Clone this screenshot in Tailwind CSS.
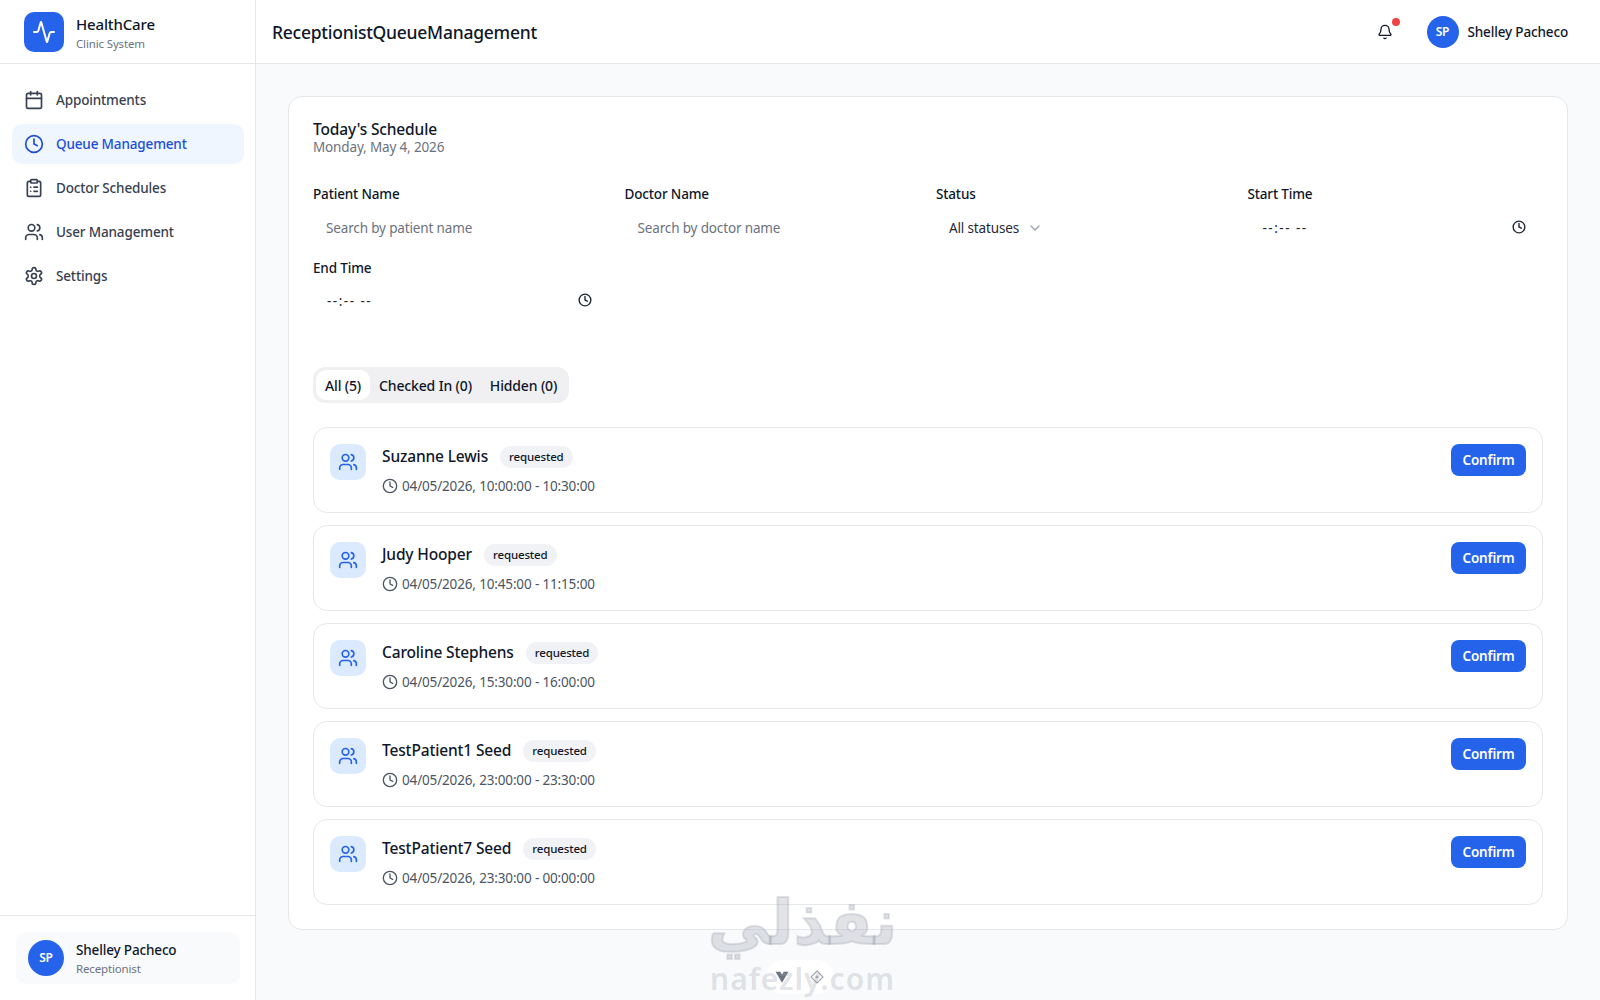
<!DOCTYPE html>
<html lang="en">
<head>
<meta charset="utf-8">
<script src="https://cdn.jsdelivr.net/npm/@tailwindcss/browser@4"></script>
<title>Queue Management</title>
</head>
<body class="font-['Noto_Sans',sans-serif] text-[#0f172a] bg-white">
<div class="relative flex h-[1000px] w-[1600px] overflow-hidden tracking-[-0.15px]">
  <aside class="flex h-full w-[256px] shrink-0 flex-col border-r border-[#e5e7eb] bg-white">
    <div class="flex h-[64px] items-center gap-3 border-b border-[#e5e7eb] px-6">
      <div class="flex h-10 w-10 items-center justify-center rounded-[10px] bg-[#2563eb]">
        <svg class="h-6 w-6" viewBox="0 0 24 24" fill="none" stroke="white" stroke-width="2" stroke-linecap="round" stroke-linejoin="round"><path d="M22 12h-2.48a2 2 0 0 0-1.93 1.46l-2.35 8.36a.25.25 0 0 1-.48 0L9.24 2.18a.25.25 0 0 0-.48 0l-2.35 8.36A2 2 0 0 1 4.49 12H2"/></svg>
      </div>
      <div class="pt-[3px]">
        <div class="text-[15px] leading-[20px] font-medium">HealthCare</div>
        <div class="mt-[2px] text-[11.5px] leading-[16px] text-[#6b7280]">Clinic System</div>
      </div>
    </div>
    <nav class="flex flex-1 flex-col gap-1 py-4 pr-[11px] pl-3">
      <a class="flex h-[40px] items-center gap-3 rounded-[10px] px-3 text-[13.5px] font-medium text-[#374151]">
        <svg class="h-5 w-5" viewBox="0 0 24 24" fill="none" stroke="currentColor" stroke-width="2" stroke-linecap="round" stroke-linejoin="round"><path d="M8 2v4"/><path d="M16 2v4"/><rect width="18" height="18" x="3" y="4" rx="2"/><path d="M3 10h18"/></svg>
        Appointments</a>
      <a class="flex h-[40px] items-center gap-3 rounded-[10px] bg-[#eff6ff] px-3 text-[13.5px] font-medium text-[#1d4ed8]">
        <svg class="h-5 w-5" viewBox="0 0 24 24" fill="none" stroke="currentColor" stroke-width="2" stroke-linecap="round" stroke-linejoin="round"><circle cx="12" cy="12" r="10"/><polyline points="12 6 12 12 16 14"/></svg>
        Queue Management</a>
      <a class="flex h-[40px] items-center gap-3 rounded-[10px] px-3 text-[13.5px] font-medium text-[#374151]">
        <svg class="h-5 w-5" viewBox="0 0 24 24" fill="none" stroke="currentColor" stroke-width="2" stroke-linecap="round" stroke-linejoin="round"><rect width="8" height="4" x="8" y="2" rx="1"/><path d="M16 4h2a2 2 0 0 1 2 2v14a2 2 0 0 1-2 2H6a2 2 0 0 1-2-2V6a2 2 0 0 1 2-2h2"/><path d="M12 11h4"/><path d="M12 16h4"/><path d="M8 11h.01"/><path d="M8 16h.01"/></svg>
        Doctor Schedules</a>
      <a class="flex h-[40px] items-center gap-3 rounded-[10px] px-3 text-[13.5px] font-medium text-[#374151]">
        <svg class="h-5 w-5" viewBox="0 0 24 24" fill="none" stroke="currentColor" stroke-width="2" stroke-linecap="round" stroke-linejoin="round"><path d="M16 21v-2a4 4 0 0 0-4-4H6a4 4 0 0 0-4 4v2"/><circle cx="9" cy="7" r="4"/><path d="M22 21v-2a4 4 0 0 0-3-3.87"/><path d="M16 3.13a4 4 0 0 1 0 7.75"/></svg>
        User Management</a>
      <a class="flex h-[40px] items-center gap-3 rounded-[10px] px-3 text-[13.5px] font-medium text-[#374151]">
        <svg class="h-5 w-5" viewBox="0 0 24 24" fill="none" stroke="currentColor" stroke-width="2" stroke-linecap="round" stroke-linejoin="round"><path d="M12.22 2h-.44a2 2 0 0 0-2 2v.18a2 2 0 0 1-1 1.73l-.43.25a2 2 0 0 1-2 0l-.15-.08a2 2 0 0 0-2.73.73l-.22.38a2 2 0 0 0 .73 2.73l.15.1a2 2 0 0 1 1 1.72v.51a2 2 0 0 1-1 1.74l-.15.09a2 2 0 0 0-.73 2.73l.22.38a2 2 0 0 0 2.73.73l.15-.08a2 2 0 0 1 2 0l.43.25a2 2 0 0 1 1 1.73V20a2 2 0 0 0 2 2h.44a2 2 0 0 0 2-2v-.18a2 2 0 0 1 1-1.73l.43-.25a2 2 0 0 1 2 0l.15.08a2 2 0 0 0 2.73-.73l.22-.39a2 2 0 0 0-.73-2.73l-.15-.08a2 2 0 0 1-1-1.74v-.5a2 2 0 0 1 1-1.74l.15-.09a2 2 0 0 0 .73-2.73l-.22-.38a2 2 0 0 0-2.73-.73l-.15.08a2 2 0 0 1-2 0l-.43-.25a2 2 0 0 1-1-1.73V4a2 2 0 0 0-2-2z"/><circle cx="12" cy="12" r="3"/></svg>
        Settings</a>
    </nav>
    <div class="border-t border-[#e5e7eb] py-4 pr-[15px] pl-4">
      <div class="flex h-[52px] items-center gap-3 rounded-[10px] bg-[#f9fafb] px-3">
        <div class="flex h-9 w-9 items-center justify-center rounded-full bg-[#2563eb] text-[12px] font-semibold text-white">SP</div>
        <div class="pt-[1px]">
          <div class="text-[13.5px] leading-[20px] font-medium">Shelley Pacheco</div>
          <div class="mt-[1px] text-[11.5px] leading-[16px] text-[#6b7280]">Receptionist</div>
        </div>
      </div>
    </div>
  </aside>
  <div class="flex h-full flex-1 flex-col bg-[#f9fafb]">
    <header class="flex h-[64px] shrink-0 items-center justify-between border-b border-[#e5e7eb] bg-white pr-8 pl-4">
      <h1 class="pt-[2px] text-[17.5px] font-medium tracking-[-0.25px]">ReceptionistQueueManagement</h1>
      <div class="flex items-center gap-[26px]">
        <div class="relative flex h-8 w-8 items-center justify-center">
          <svg class="h-4 w-4" viewBox="0 0 24 24" fill="none" stroke="currentColor" stroke-width="2" stroke-linecap="round" stroke-linejoin="round"><path d="M10.268 21a2 2 0 0 0 3.464 0"/><path d="M3.262 15.326A1 1 0 0 0 4 17h16a1 1 0 0 0 .74-1.673C19.41 13.956 18 12.499 18 8A6 6 0 0 0 6 8c0 4.499-1.411 5.956-2.738 7.326"/></svg>
          <span class="absolute top-[2px] right-[1px] h-2 w-2 rounded-full bg-[#ef4444]"></span>
        </div>
        <div class="flex items-center gap-[9px]">
          <div class="flex h-8 w-8 items-center justify-center rounded-full bg-[#2563eb] text-[12px] font-semibold text-white">SP</div>
          <span class="pt-[2px] text-[13.5px] font-medium">Shelley Pacheco</span>
        </div>
      </div>
    </header>
    <main class="flex-1 p-8">
      <section class="rounded-[14px] border border-[#e5e7eb] bg-white p-6">
        <h2 class="text-[15.5px] leading-[16px] font-medium">Today's Schedule</h2>
        <p class="text-[13.5px] leading-[20px] text-[#6b7280]">Monday, May 4, 2026</p>
        <div class="mt-[27px] grid grid-cols-4 gap-x-4 gap-y-3">
          <div>
            <label class="block text-[13.5px] leading-[20px] font-medium">Patient Name</label>
            <div class="mt-[6px] flex h-9 items-center px-[13px] text-[13.5px] text-[#6b7280]">Search by patient name</div>
          </div>
          <div>
            <label class="block text-[13.5px] leading-[20px] font-medium">Doctor Name</label>
            <div class="mt-[6px] flex h-9 items-center px-[13px] text-[13.5px] text-[#6b7280]">Search by doctor name</div>
          </div>
          <div>
            <label class="block text-[13.5px] leading-[20px] font-medium">Status</label>
            <div class="mt-[6px] flex h-9 items-center gap-2 px-[13px] text-[13.5px] text-[#1f2937]">All statuses
              <svg class="h-4 w-4 text-[#9ca3af]" viewBox="0 0 24 24" fill="none" stroke="currentColor" stroke-width="2" stroke-linecap="round" stroke-linejoin="round"><path d="m6 9 6 6 6-6"/></svg>
            </div>
          </div>
          <div>
            <label class="block text-[13.5px] leading-[20px] font-medium">Start Time</label>
            <div class="mt-[6px] flex h-9 items-center justify-between pr-[17px] pl-[15px] text-[13.5px] tracking-[1.5px] text-[#1f2937]"><span>--:-- --</span>
              <svg class="-mt-[2px] h-[14px] w-[14px]" viewBox="0 0 24 24" fill="none" stroke="currentColor" stroke-width="2.4" stroke-linecap="round" stroke-linejoin="round"><circle cx="12" cy="12" r="10"/><polyline points="12 6 12 12 16 14"/></svg>
            </div>
          </div>
          <div>
            <label class="block text-[13.5px] leading-[20px] font-medium">End Time</label>
            <div class="mt-[5px] flex h-9 items-center justify-between pr-[17px] pl-[14px] text-[13.5px] tracking-[1.5px] text-[#1f2937]"><span>--:-- --</span>
              <svg class="-mt-[2px] h-[14px] w-[14px]" viewBox="0 0 24 24" fill="none" stroke="currentColor" stroke-width="2.4" stroke-linecap="round" stroke-linejoin="round"><circle cx="12" cy="12" r="10"/><polyline points="12 6 12 12 16 14"/></svg>
            </div>
          </div>
        </div>
        <div class="mt-[48px] inline-flex h-9 items-center rounded-[12px] bg-[#f0f0f2] p-[3px] text-[14px] font-medium">
          <span class="flex h-[30px] items-center rounded-[10px] bg-white px-[9px]">All (5)</span>
          <span class="flex h-[30px] items-center px-[9px]">Checked In (0)</span>
          <span class="flex h-[30px] items-center px-[9px]">Hidden (0)</span>
        </div>
        <div class="mt-6 flex flex-col gap-3">
          <article class="flex h-[86px] items-start justify-between rounded-[14px] border border-[#e5e7eb] p-4">
            <div class="flex gap-4">
              <div class="flex h-9 w-9 items-center justify-center rounded-[10px] bg-[#dbeafe] text-[#2563eb]">
                <svg class="h-5 w-5" viewBox="0 0 24 24" fill="none" stroke="currentColor" stroke-width="2" stroke-linecap="round" stroke-linejoin="round"><path d="M16 21v-2a4 4 0 0 0-4-4H6a4 4 0 0 0-4 4v2"/><circle cx="9" cy="7" r="4"/><path d="M22 21v-2a4 4 0 0 0-3-3.87"/><path d="M16 3.13a4 4 0 0 1 0 7.75"/></svg>
              </div>
              <div class="pt-[1px]">
                <div class="flex h-6 items-center gap-3"><span class="text-[15.5px] font-medium">Suzanne Lewis</span><span class="rounded-full bg-[#f1f2f5] px-[9px] py-[3px] text-[11.5px] leading-[16px] font-medium">requested</span></div>
                <div class="mt-[7px] flex items-center gap-1 text-[13.5px] leading-[20px] text-[#4b5563]">
                  <svg class="h-4 w-4" viewBox="0 0 24 24" fill="none" stroke="currentColor" stroke-width="2" stroke-linecap="round" stroke-linejoin="round"><circle cx="12" cy="12" r="10"/><polyline points="12 6 12 12 16 14"/></svg>
                  04/05/2026, 10:00:00 - 10:30:00</div>
              </div>
            </div>
            <button class="h-8 w-[75px] rounded-[8px] bg-[#2563eb] text-[13.5px] font-semibold text-white">Confirm</button>
          </article>
          <article class="flex h-[86px] items-start justify-between rounded-[14px] border border-[#e5e7eb] p-4">
            <div class="flex gap-4">
              <div class="flex h-9 w-9 items-center justify-center rounded-[10px] bg-[#dbeafe] text-[#2563eb]">
                <svg class="h-5 w-5" viewBox="0 0 24 24" fill="none" stroke="currentColor" stroke-width="2" stroke-linecap="round" stroke-linejoin="round"><path d="M16 21v-2a4 4 0 0 0-4-4H6a4 4 0 0 0-4 4v2"/><circle cx="9" cy="7" r="4"/><path d="M22 21v-2a4 4 0 0 0-3-3.87"/><path d="M16 3.13a4 4 0 0 1 0 7.75"/></svg>
              </div>
              <div class="pt-[1px]">
                <div class="flex h-6 items-center gap-3"><span class="text-[15.5px] font-medium">Judy Hooper</span><span class="rounded-full bg-[#f1f2f5] px-[9px] py-[3px] text-[11.5px] leading-[16px] font-medium">requested</span></div>
                <div class="mt-[7px] flex items-center gap-1 text-[13.5px] leading-[20px] text-[#4b5563]">
                  <svg class="h-4 w-4" viewBox="0 0 24 24" fill="none" stroke="currentColor" stroke-width="2" stroke-linecap="round" stroke-linejoin="round"><circle cx="12" cy="12" r="10"/><polyline points="12 6 12 12 16 14"/></svg>
                  04/05/2026, 10:45:00 - 11:15:00</div>
              </div>
            </div>
            <button class="h-8 w-[75px] rounded-[8px] bg-[#2563eb] text-[13.5px] font-semibold text-white">Confirm</button>
          </article>
          <article class="flex h-[86px] items-start justify-between rounded-[14px] border border-[#e5e7eb] p-4">
            <div class="flex gap-4">
              <div class="flex h-9 w-9 items-center justify-center rounded-[10px] bg-[#dbeafe] text-[#2563eb]">
                <svg class="h-5 w-5" viewBox="0 0 24 24" fill="none" stroke="currentColor" stroke-width="2" stroke-linecap="round" stroke-linejoin="round"><path d="M16 21v-2a4 4 0 0 0-4-4H6a4 4 0 0 0-4 4v2"/><circle cx="9" cy="7" r="4"/><path d="M22 21v-2a4 4 0 0 0-3-3.87"/><path d="M16 3.13a4 4 0 0 1 0 7.75"/></svg>
              </div>
              <div class="pt-[1px]">
                <div class="flex h-6 items-center gap-3"><span class="text-[15.5px] font-medium">Caroline Stephens</span><span class="rounded-full bg-[#f1f2f5] px-[9px] py-[3px] text-[11.5px] leading-[16px] font-medium">requested</span></div>
                <div class="mt-[7px] flex items-center gap-1 text-[13.5px] leading-[20px] text-[#4b5563]">
                  <svg class="h-4 w-4" viewBox="0 0 24 24" fill="none" stroke="currentColor" stroke-width="2" stroke-linecap="round" stroke-linejoin="round"><circle cx="12" cy="12" r="10"/><polyline points="12 6 12 12 16 14"/></svg>
                  04/05/2026, 15:30:00 - 16:00:00</div>
              </div>
            </div>
            <button class="h-8 w-[75px] rounded-[8px] bg-[#2563eb] text-[13.5px] font-semibold text-white">Confirm</button>
          </article>
          <article class="flex h-[86px] items-start justify-between rounded-[14px] border border-[#e5e7eb] p-4">
            <div class="flex gap-4">
              <div class="flex h-9 w-9 items-center justify-center rounded-[10px] bg-[#dbeafe] text-[#2563eb]">
                <svg class="h-5 w-5" viewBox="0 0 24 24" fill="none" stroke="currentColor" stroke-width="2" stroke-linecap="round" stroke-linejoin="round"><path d="M16 21v-2a4 4 0 0 0-4-4H6a4 4 0 0 0-4 4v2"/><circle cx="9" cy="7" r="4"/><path d="M22 21v-2a4 4 0 0 0-3-3.87"/><path d="M16 3.13a4 4 0 0 1 0 7.75"/></svg>
              </div>
              <div class="pt-[1px]">
                <div class="flex h-6 items-center gap-3"><span class="text-[15.5px] font-medium">TestPatient1 Seed</span><span class="rounded-full bg-[#f1f2f5] px-[9px] py-[3px] text-[11.5px] leading-[16px] font-medium">requested</span></div>
                <div class="mt-[7px] flex items-center gap-1 text-[13.5px] leading-[20px] text-[#4b5563]">
                  <svg class="h-4 w-4" viewBox="0 0 24 24" fill="none" stroke="currentColor" stroke-width="2" stroke-linecap="round" stroke-linejoin="round"><circle cx="12" cy="12" r="10"/><polyline points="12 6 12 12 16 14"/></svg>
                  04/05/2026, 23:00:00 - 23:30:00</div>
              </div>
            </div>
            <button class="h-8 w-[75px] rounded-[8px] bg-[#2563eb] text-[13.5px] font-semibold text-white">Confirm</button>
          </article>
          <article class="flex h-[86px] items-start justify-between rounded-[14px] border border-[#e5e7eb] p-4">
            <div class="flex gap-4">
              <div class="flex h-9 w-9 items-center justify-center rounded-[10px] bg-[#dbeafe] text-[#2563eb]">
                <svg class="h-5 w-5" viewBox="0 0 24 24" fill="none" stroke="currentColor" stroke-width="2" stroke-linecap="round" stroke-linejoin="round"><path d="M16 21v-2a4 4 0 0 0-4-4H6a4 4 0 0 0-4 4v2"/><circle cx="9" cy="7" r="4"/><path d="M22 21v-2a4 4 0 0 0-3-3.87"/><path d="M16 3.13a4 4 0 0 1 0 7.75"/></svg>
              </div>
              <div class="pt-[1px]">
                <div class="flex h-6 items-center gap-3"><span class="text-[15.5px] font-medium">TestPatient7 Seed</span><span class="rounded-full bg-[#f1f2f5] px-[9px] py-[3px] text-[11.5px] leading-[16px] font-medium">requested</span></div>
                <div class="mt-[7px] flex items-center gap-1 text-[13.5px] leading-[20px] text-[#4b5563]">
                  <svg class="h-4 w-4" viewBox="0 0 24 24" fill="none" stroke="currentColor" stroke-width="2" stroke-linecap="round" stroke-linejoin="round"><circle cx="12" cy="12" r="10"/><polyline points="12 6 12 12 16 14"/></svg>
                  04/05/2026, 23:30:00 - 00:00:00</div>
              </div>
            </div>
            <button class="h-8 w-[75px] rounded-[8px] bg-[#2563eb] text-[13.5px] font-semibold text-white">Confirm</button>
          </article>
        </div>
      </section>
    </main>
  </div>
  <!-- floating devtools pill and watermark -->
  <div class="absolute top-[960px] left-[766px] flex h-[34px] w-[68px] items-center justify-center gap-[20px] rounded-full bg-white">
    <svg class="h-[14px] w-[14px]" viewBox="0 0 24 24"><path d="M1 3h8l3 5 3-5h8L12 22z" fill="#6b7280"/></svg>
    <svg class="h-[16px] w-[16px]" viewBox="0 0 24 24" fill="none" stroke="#9ca3af" stroke-width="1.6"><path d="M12 3l9 9-9 9-9-9z"/><circle cx="12" cy="12" r="1.5"/></svg>
  </div>
  <div class="pointer-events-none absolute top-[890px] left-[680px] flex w-[245px] flex-col items-center tracking-normal text-[#9ca3af]/30">
    <div class="h-[66px] font-['DejaVu_Sans',sans-serif] text-[62px] leading-[66px] font-bold [-webkit-text-stroke:2px_rgba(156,163,175,0.3)]" dir="rtl" lang="ar">نفذلي</div>
    <div class="mt-[4px] text-[30px] leading-[38px] font-semibold tracking-[1px]">nafezly.com</div>
  </div>
</div>
</body>
</html>
